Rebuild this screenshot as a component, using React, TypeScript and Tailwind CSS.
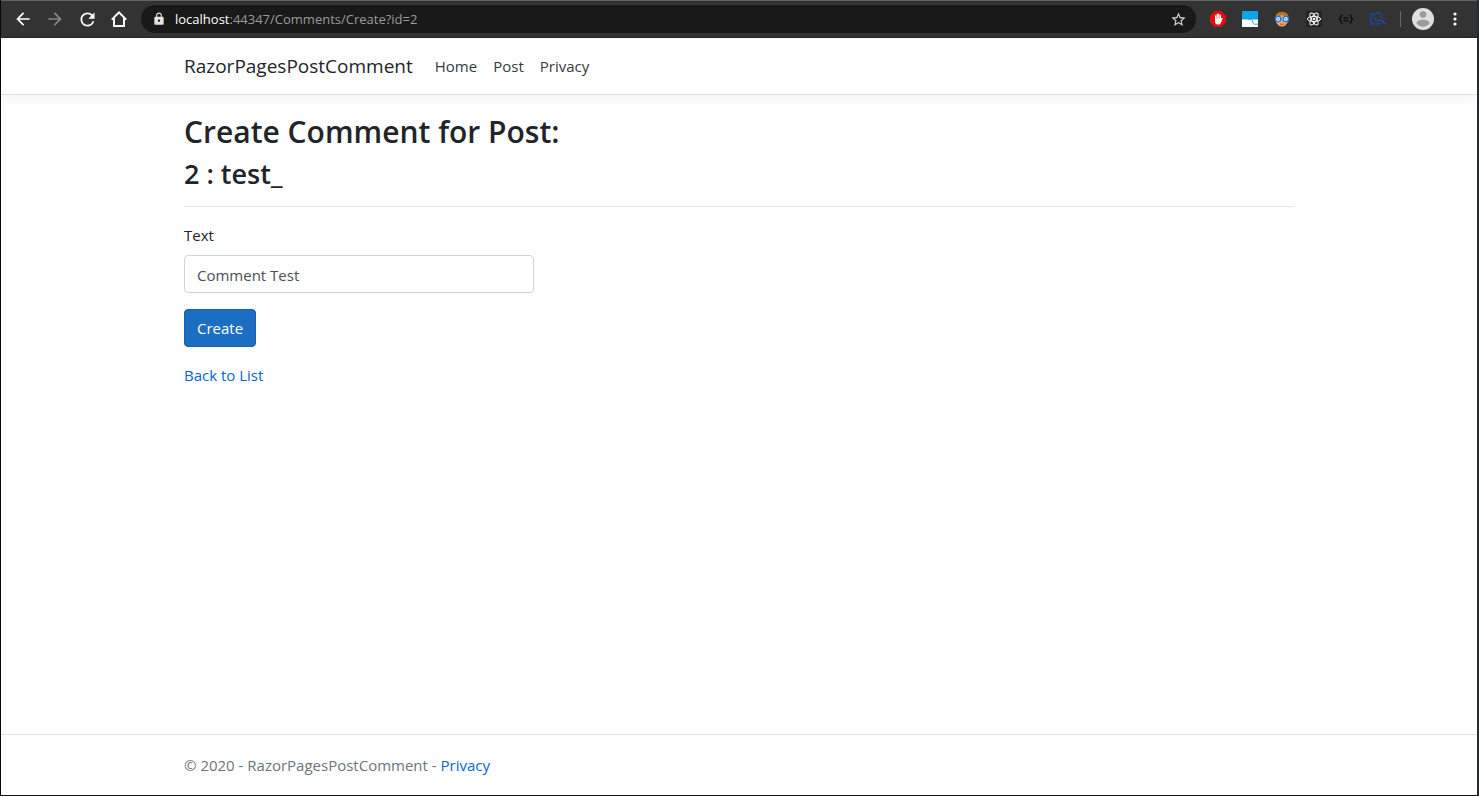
import type { ReactNode } from 'react';
import { MdArrowBack, MdArrowForward, MdLock, MdRefresh, MdStarBorder } from 'react-icons/md';

function ToolButton({ label, children }: { label: string; children: ReactNode }) {
  return (
    <button type="button" aria-label={label} className="flex size-8 shrink-0 items-center justify-center text-white">
      {children}
    </button>
  );
}

function HomeIcon() {
  return (
    <svg width="16" height="16" viewBox="0 0 16 16" fill="none" stroke="currentColor" strokeWidth="2">
      <path d="M0.8 8.6 8 1.4l7.2 7.2M3 7v8h10V7" />
    </svg>
  );
}

function BlockerIcon() {
  return (
    <svg width="16" height="16" viewBox="0 0 16 16">
      <path d="M4.8 0h6.4L16 4.8v6.4L11.2 16H4.8L0 11.2V4.8z" fill="#e40d0d" />
      <path
        d="M5.600 8.200V5M7.200 7.500V3.400M8.800 7.500V3.200M10.400 9V4.400"
        stroke="#fff"
        strokeWidth="1.300"
        strokeLinecap="round"
      />
      <path d="M5 7.500h6l.9-.5c.6-.3 1 .2.700.7L10.800 12c-.5 1-1.200 1.500-2.200 1.500h-.9C6.100 13.500 5 12.400 5 10.600z" fill="#fff" />
    </svg>
  );
}

function WaveIcon() {
  return (
    <svg width="16" height="16" viewBox="0 0 16 16">
      <path d="M0 0h16v16H0z" fill="#fff" />
      <path d="M0 0h16v8.500H0z" fill="#06a5ec" />
      <path d="M6 8.200h3c.8 0 1.100.4 1.300 1.200l.7 2.400c.3 1 .8 1.400 1.700 1.400H16" fill="none" stroke="#3b9fce" strokeWidth="1" />
    </svg>
  );
}

function GogglesIcon() {
  return (
    <svg width="16" height="16" viewBox="0 0 16 16">
      <path d="M1.200 9C1 3.500 3.500.8 8 .8s7 2.700 6.800 8.200l-1.300 3.500h-11z" fill="#b47632" />
      <path d="M2.500 8c1-2 3-3 5-4 2 1 4.500 2 5.700 4v3c-.8 3-2.700 4.500-5.200 4.500S3.200 14 2.600 11z" fill="#e8a878" />
      <path d="M6.200 13.200h3.600" stroke="#9a4a35" />
      <circle cx="4.200" cy="8" r="2.600" fill="#e8f4ff" stroke="#1f7bd0" strokeWidth="1.300" />
      <circle cx="11.800" cy="8" r="2.600" fill="#e8f4ff" stroke="#1f7bd0" strokeWidth="1.300" />
      <circle cx="4.400" cy="8" r=".8" fill="#285f9a" />
      <circle cx="11.600" cy="8" r=".8" fill="#285f9a" />
    </svg>
  );
}

function AtomIcon() {
  return (
    <svg width="16" height="16" viewBox="0 0 16 16" fill="none" stroke="#fff" strokeWidth="1">
      <path d="M0 0h16v16H0z" fill="#242424" stroke="none" />
      <ellipse cx="8" cy="8" rx="6.600" ry="2.600" />
      <ellipse cx="8" cy="8" rx="6.600" ry="2.600" transform="rotate(60 8 8)" />
      <ellipse cx="8" cy="8" rx="6.600" ry="2.600" transform="rotate(120 8 8)" />
      <circle cx="8" cy="8" r="1.300" fill="#fff" stroke="none" />
    </svg>
  );
}

function BracesIcon() {
  return (
    <svg width="16" height="16" viewBox="0 0 16 16" fill="none" stroke="#0c0c0c" strokeWidth="1.400">
      <path d="M4.500 4.200c-1.500 0-1.800.5-1.800 1.600 0 1.200 0 2-1.200 2.400 1.200.4 1.200 1.200 1.200 2.400 0 1.100.3 1.600 1.800 1.600M11.500 4.200c1.500 0 1.800.5 1.800 1.600 0 1.200 0 2 1.200 2.400-1.200.4-1.200 1.200-1.200 2.400 0 1.100-.3 1.600-1.800 1.600M5.500 7h5M5.500 9.600h5" />
    </svg>
  );
}

function InspectIcon() {
  return (
    <svg width="16" height="16" viewBox="0 0 16 16" fill="none" stroke="#1d479f" strokeWidth="1.300">
      <path d="M4 3.200H.8v10h8.700v-2" />
      <path d="M.8 11.500 3 13.200" />
      <circle cx="8.200" cy="5.800" r="4" strokeWidth="1.400" />
      <path d="m11 8.800 4.500 4.200" strokeWidth="2" />
    </svg>
  );
}

function AvatarIcon() {
  return (
    <svg width="22" height="22" viewBox="0 0 22 22">
      <circle cx="11" cy="11" r="11" fill="#dfdfdf" />
      <circle cx="11" cy="6.500" r="3.300" fill="#9c9c9c" />
      <path d="M4.500 15.500c0-2.300 3-3.800 6.500-3.800s6.500 1.500 6.500 3.800c-1.400 2-3.700 3.200-6.500 3.200s-5.100-1.200-6.500-3.200z" fill="#9c9c9c" />
    </svg>
  );
}

function MenuIcon() {
  return (
    <svg width="4" height="14" viewBox="0 0 4 14" fill="#fff">
      <circle cx="2" cy="2" r="1.600" />
      <circle cx="2" cy="7" r="1.600" />
      <circle cx="2" cy="12" r="1.600" />
    </svg>
  );
}

function BrowserBar() {
  return (
    <div className="flex h-[38px] items-center border-t border-b border-t-[#606461] border-b-[#252525] bg-[#333333] pr-[6px] pl-[6px]">
      <ToolButton label="Back"><MdArrowBack size={20} /></ToolButton>
      <ToolButton label="Forward"><MdArrowForward size={20} className="text-[#878787]" /></ToolButton>
      <ToolButton label="Reload"><MdRefresh size={21} /></ToolButton>
      <ToolButton label="Home"><HomeIcon /></ToolButton>
      <div className="ml-[6px] flex h-7 min-w-0 flex-1 items-center rounded-full bg-[#191919] pr-[9px] pl-[11px]">
        <MdLock size={14} className="shrink-0 text-[#e4e4e4]" />
        <div className="ml-[9px] min-w-0 flex-1 truncate text-[13px] leading-5 text-[#9b9b9b]">
          <span className="text-white">localhost</span>:44347/Comments/Create?id=2
        </div>
        <button type="button" aria-label="Bookmark this page" className="text-[#d8d8d8]"><MdStarBorder size={17} /></button>
      </div>
      <div className="ml-[6px] flex items-center">
        <ToolButton label="Ad blocker"><BlockerIcon /></ToolButton>
        <ToolButton label="Wave"><WaveIcon /></ToolButton>
        <ToolButton label="Goggles"><GogglesIcon /></ToolButton>
        <ToolButton label="Component tools"><AtomIcon /></ToolButton>
        <ToolButton label="Formatter"><BracesIcon /></ToolButton>
        <ToolButton label="Inspector"><InspectIcon /></ToolButton>
      </div>
      <div className="ml-[6px] h-4 w-px bg-[#686868]" />
      <div className="ml-[6px] flex items-center">
        <ToolButton label="Profile"><AvatarIcon /></ToolButton>
        <ToolButton label="Menu"><MenuIcon /></ToolButton>
      </div>
    </div>
  );
}

export default function App() {
  return (
    <div className="flex min-h-screen flex-col border-r-2 border-b border-l border-r-[#252a2d] border-b-[#15121a] border-l-[#08090d] bg-white font-['Open_Sans','Noto_Sans',sans-serif] text-[15px] leading-6 text-[#212529]">
      <BrowserBar />
      <header className="border-b border-[#dee2e6] shadow-[0_4px_12px_rgba(0,0,0,0.05)]">
        <nav className="mx-auto flex h-14 max-w-[1140px] items-center px-[15px]">
          <a href="#" className="mr-[14px] text-[19px] text-[#212529]">RazorPagesPostComment</a>
          <ul className="flex text-[#343a40]">
            <li><a href="#" className="px-2">Home</a></li>
            <li><a href="#" className="px-2">Post</a></li>
            <li><a href="#" className="px-2">Privacy</a></li>
          </ul>
        </nav>
      </header>
      <main className="mx-auto w-full max-w-[1140px] flex-1 px-[15px] pt-[18px] pb-4">
        <h1 className="mb-[6px] text-[30px] leading-[38px] font-semibold">Create Comment for Post:</h1>
        <h2 className="text-[27px] leading-[34px] font-semibold">2 : test_</h2>
        <hr className="mt-[15px] mb-4 border-[#e5e5e5]" />
        <form onSubmit={(event) => event.preventDefault()}>
          <label htmlFor="comment-text" className="mb-2 block">Text</label>
          <input
            id="comment-text"
            type="text"
            defaultValue="Comment Test"
            className="mb-4 block h-[38px] w-full max-w-[350px] rounded border border-[#ced4da] bg-white px-3 pt-[2px] text-[#495057]"
          />
          <button type="submit" className="mb-4 block h-[38px] rounded border border-[#1861ac] bg-[#1b6ec2] px-3 text-white">
            Create
          </button>
        </form>
        <a href="#" className="text-[#0366d6]">Back to List</a>
      </main>
      <footer className="border-t border-[#dee2e6] text-[#6c757d]">
        <div className="mx-auto max-w-[1140px] px-[15px] leading-[60px]">
          © 2020 - RazorPagesPostComment - <a href="#" className="text-[#0366d6]">Privacy</a>
        </div>
      </footer>
    </div>
  );
}
